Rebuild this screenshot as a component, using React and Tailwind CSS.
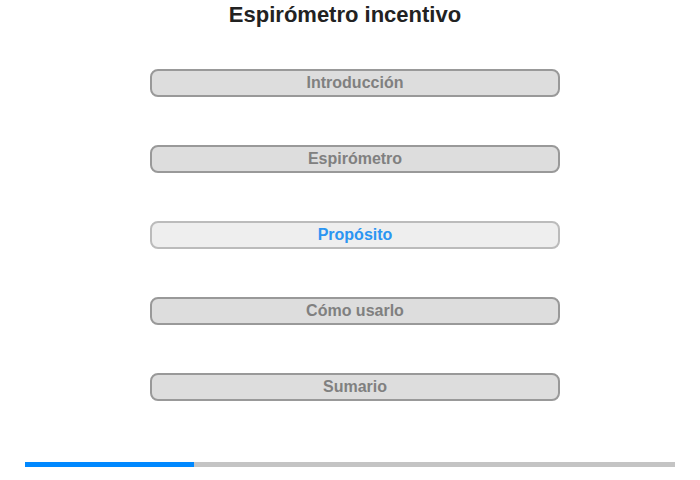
import React from "react";

const items = [
  { label: "Introducción", active: false },
  { label: "Espirómetro", active: false },
  { label: "Propósito", active: true },
  { label: "Cómo usarlo", active: false },
  { label: "Sumario", active: false },
];

const App = () => {
  return (
    <div className="w-[700px] h-[480px] bg-white font-['Liberation_Sans',Arial,sans-serif] flex flex-col">
      {/* Title */}
      <h1 className="h-[28px] pr-[10px] flex items-center justify-center text-[22px] font-bold text-[#222]">
        Espirómetro incentivo
      </h1>

      {/* Menu */}
      <div className="mt-[41px] flex flex-col gap-[48px] pl-[150px]">
        {items.map((item) => (
          <button
            key={item.label}
            className={
              item.active
                ? "w-[410px] h-[28px] rounded-[8px] border-2 border-[#bbbbbb] bg-[#eeeeee] text-[#2b95f2] text-[16px] font-bold flex items-center justify-center"
                : "w-[410px] h-[28px] rounded-[8px] border-2 border-[#999999] bg-[#dddddd] text-[#808080] text-[16px] font-bold flex items-center justify-center"
            }
          >
            {item.label}
          </button>
        ))}
      </div>

      {/* Progress */}
      <div className="mt-[61px] mx-[25px] h-[5px] bg-[#c4c4c4] flex">
        <div className="w-[169px] h-full bg-[#0088ff]" />
      </div>
    </div>
  );
};

export default App;
